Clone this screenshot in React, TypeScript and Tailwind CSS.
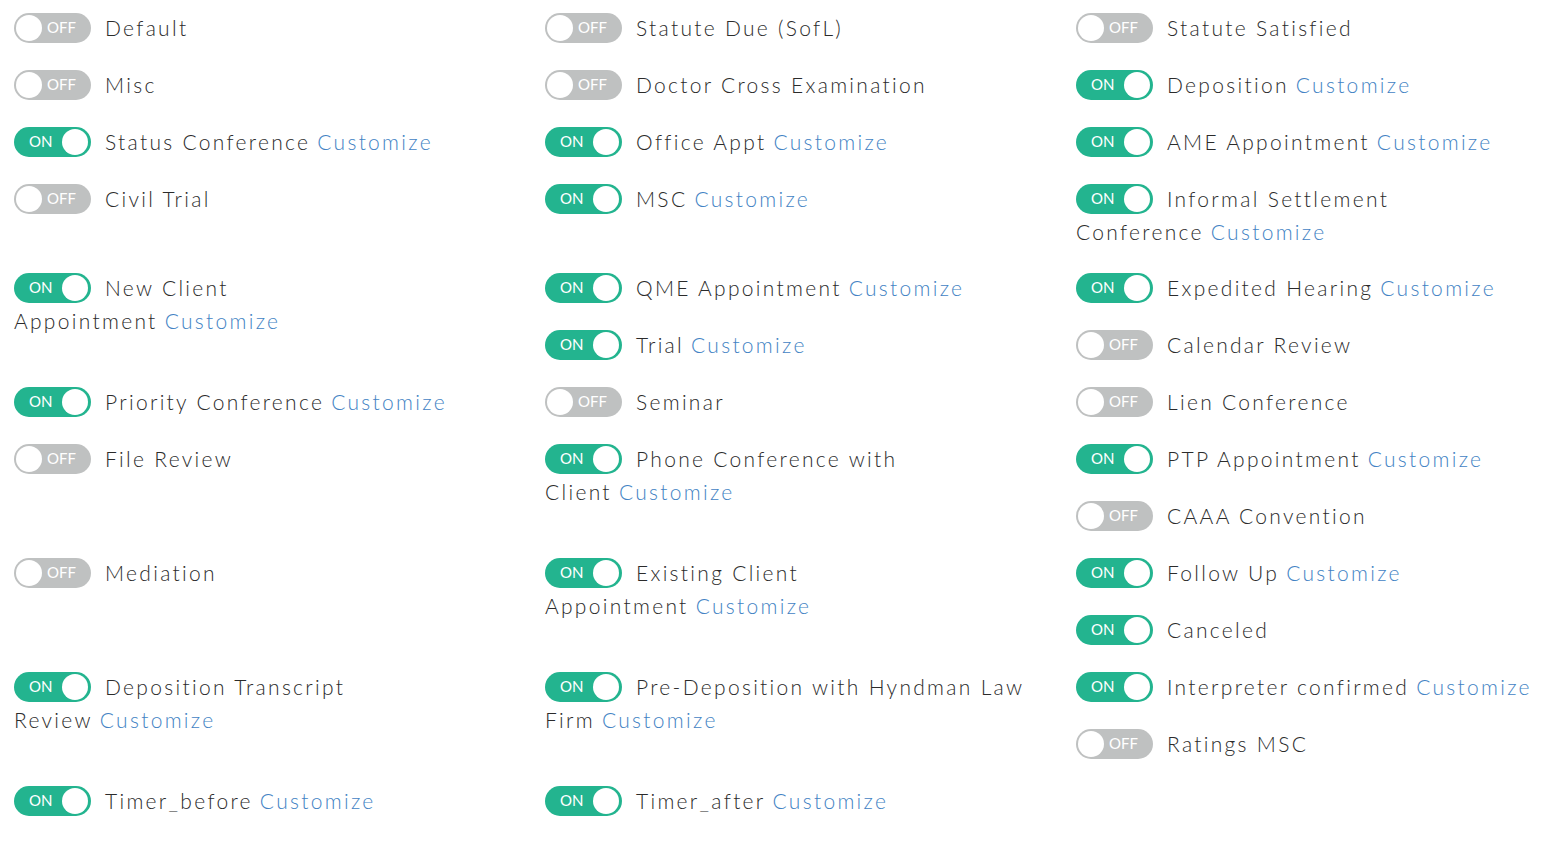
import React from 'react';

type Item = {
    label: string;
    rest?: string;
    on: boolean;
    custom?: boolean;
};

const items: Item[] = [
    { label: 'Default', on: false },
    { label: 'Statute Due (SofL)', on: false },
    { label: 'Statute Satisfied', on: false },
    { label: 'Misc', on: false },
    { label: 'Doctor Cross Examination', on: false },
    { label: 'Deposition', on: true, custom: true },
    { label: 'Status Conference', on: true, custom: true },
    { label: 'Office Appt', on: true, custom: true },
    { label: 'AME Appointment', on: true, custom: true },
    { label: 'Civil Trial', on: false },
    { label: 'MSC', on: true, custom: true },
    { label: 'Informal Settlement', rest: 'Conference', on: true, custom: true },
    { label: 'New Client', rest: 'Appointment', on: true, custom: true },
    { label: 'QME Appointment', on: true, custom: true },
    { label: 'Expedited Hearing', on: true, custom: true },
    { label: 'Trial', on: true, custom: true },
    { label: 'Calendar Review', on: false },
    { label: 'Priority Conference', on: true, custom: true },
    { label: 'Seminar', on: false },
    { label: 'Lien Conference', on: false },
    { label: 'File Review', on: false },
    { label: 'Phone Conference with', rest: 'Client', on: true, custom: true },
    { label: 'PTP Appointment', on: true, custom: true },
    { label: 'CAAA Convention', on: false },
    { label: 'Mediation', on: false },
    { label: 'Existing Client', rest: 'Appointment', on: true, custom: true },
    { label: 'Follow Up', on: true, custom: true },
    { label: 'Canceled', on: true },
    { label: 'Deposition Transcript', rest: 'Review', on: true, custom: true },
    { label: 'Pre-Deposition with Hyndman Law', rest: 'Firm', on: true, custom: true },
    { label: 'Interpreter confirmed', on: true, custom: true },
    { label: 'Ratings MSC', on: false },
    { label: 'Timer_before', on: true, custom: true },
    { label: 'Timer_after', on: true, custom: true },
];

function Toggle({ on }: { on: boolean }) {
    if (on) {
        return (
            <div className="flex items-center justify-between shrink-0 w-[77px] h-[30px] rounded-full bg-[#23b48f] pl-[15px] pr-[3px]">
                <span className="text-[15px] leading-none text-white tracking-normal font-normal">ON</span>
                <span className="w-[26px] h-[26px] rounded-full bg-white" />
            </div>
        );
    }
    return (
        <div className="flex items-center gap-[5px] shrink-0 w-[77px] h-[30px] rounded-full bg-[#bfc1c1] pl-[2px]">
            <span className="w-[26px] h-[26px] rounded-full bg-white" />
            <span className="text-[15px] leading-none text-white tracking-normal font-normal">OFF</span>
        </div>
    );
}

function Customize() {
    return <a href="#" className="ml-[7px] text-[#4383c4]">Customize</a>;
}

function Row({ item }: { item: Item }) {
    return (
        <div className="float-left w-[470px] mr-[61px] mb-[24px] whitespace-nowrap">
            <div className="flex items-center h-[33px] gap-[14px]">
                <Toggle on={item.on} />
                <span>
                    {item.label}
                    {item.custom && !item.rest && <Customize />}
                </span>
            </div>
            {item.rest && (
                <div className="h-[32px] leading-[34px]">
                    {item.rest}
                    {item.custom && <Customize />}
                </div>
            )}
        </div>
    );
}

export default function App() {
    return (
        <div className="w-full min-h-screen bg-white overflow-hidden">
            <div
                className="w-[1640px] pl-[14px] pt-[11px] text-[21px] font-light tracking-[2.3px] text-[#2b2b2b]"
                style={{ fontFamily: 'Lato, "Noto Sans", sans-serif' }}
            >
                {items.map((item) => (
                    <Row key={item.label} item={item} />
                ))}
                <div className="clear-both" />
            </div>
        </div>
    );
}
